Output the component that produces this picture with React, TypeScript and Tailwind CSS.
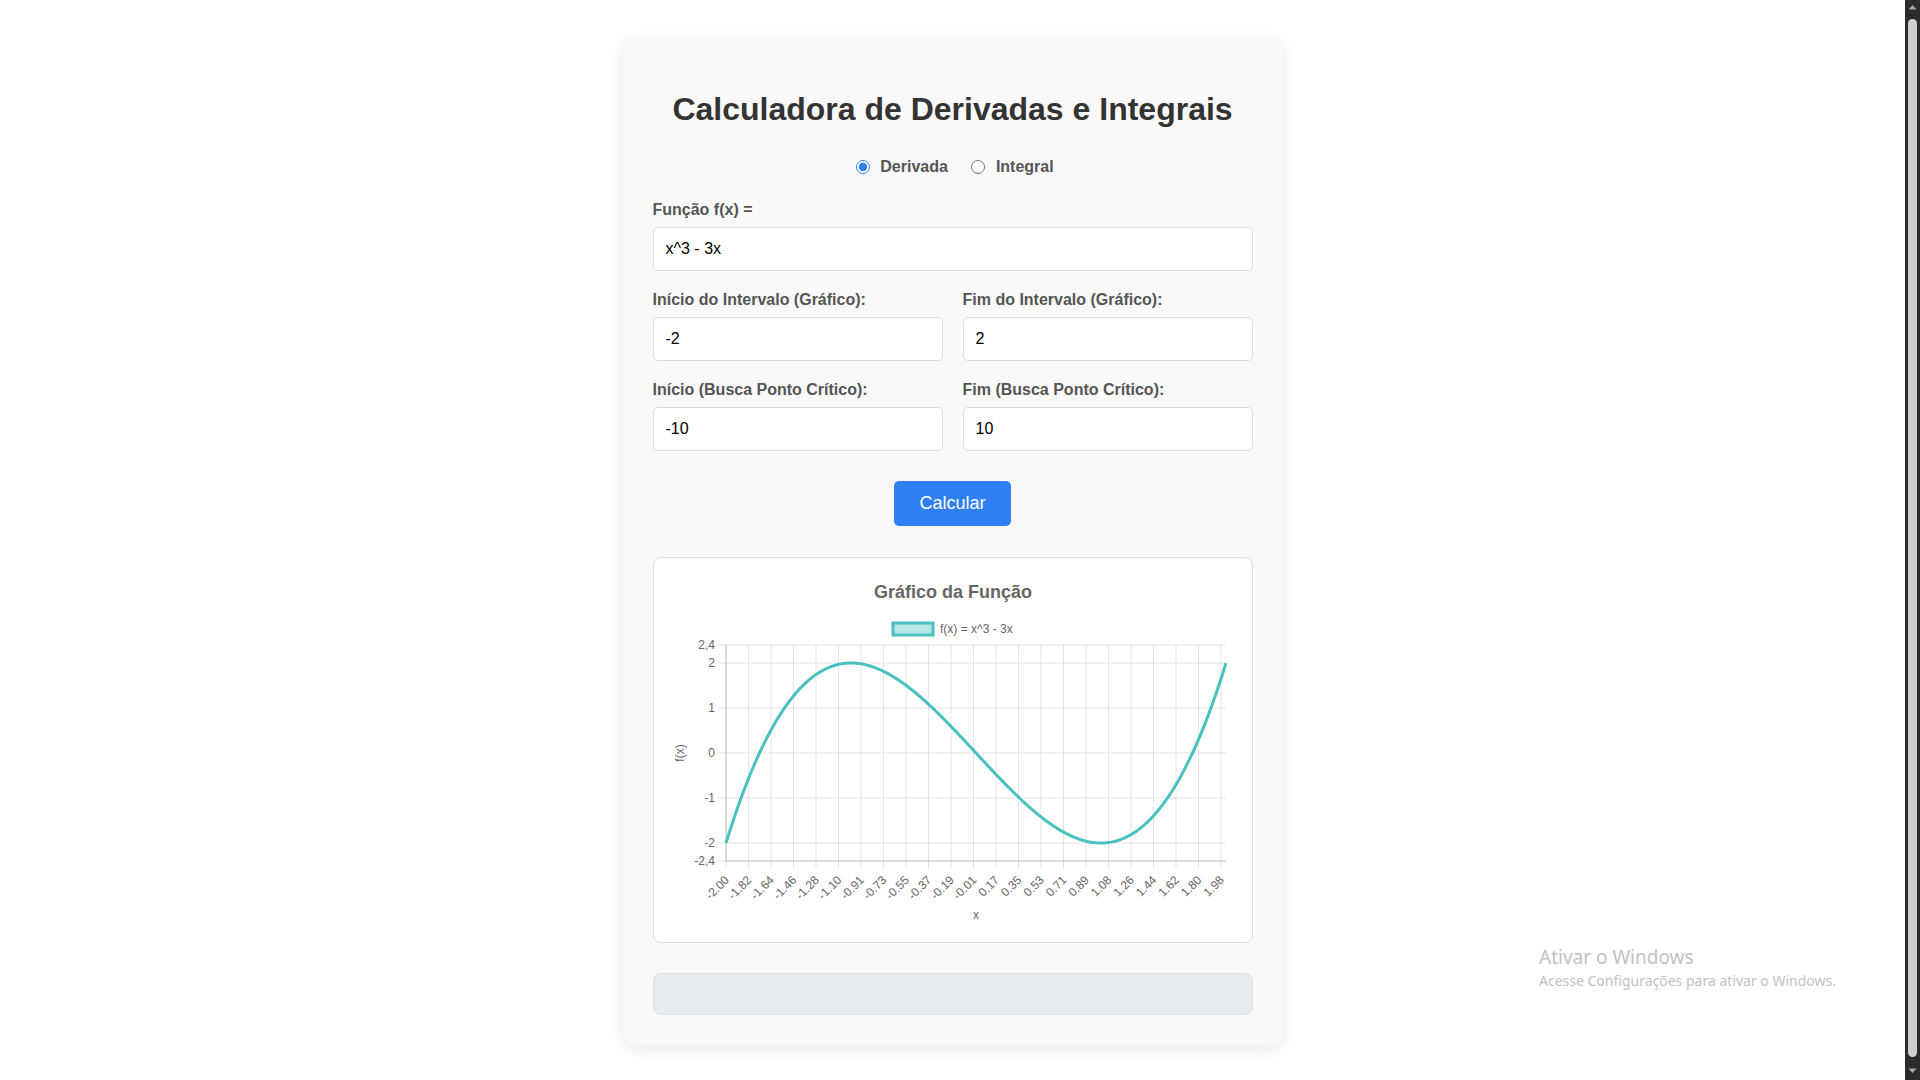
import React from "react";

const xLabels = [
  "-2.00", "-1.82", "-1.64", "-1.46", "-1.28", "-1.10", "-0.91", "-0.73", "-0.55", "-0.37", "-0.19", "-0.01",
  "0.17", "0.35", "0.53", "0.71", "0.89", "1.08", "1.26", "1.44", "1.62", "1.80", "1.98",
];

const yTicks = [
  { label: "2,4", y: 87 },
  { label: "2", y: 105 },
  { label: "1", y: 150 },
  { label: "0", y: 195 },
  { label: "-1", y: 240 },
  { label: "-2", y: 285 },
  { label: "-2,4", y: 303 },
];

function Chart() {
  const pts = Array.from({ length: 201 }, (_, i) => {
    const x = -2 + 0.02 * i;
    const y = x * x * x - 3 * x;
    return `${(72 + 2.5 * i).toFixed(2)},${(195 - 45 * y).toFixed(2)}`;
  }).join(" ");
  const grid = "rgba(0,0,0,0.1)";
  return (
    <svg width="598" height="384" className="block" style={{ fontFamily: "'Liberation Sans', Arial, sans-serif" }}>
      <text x="299" y="40" textAnchor="middle" fontSize="18" fontWeight="bold" fill="#666">
        Gráfico da Função
      </text>
      <rect x="239" y="65" width="40" height="12" fill="rgba(75,192,192,0.4)" stroke="rgb(75,192,192)" strokeWidth="3" />
      <text x="286" y="75" fontSize="12" fill="#666">f(x) = x^3 - 3x</text>

      {yTicks.map((t) => (
        <g key={t.label}>
          <line x1="64" x2="572" y1={t.y} y2={t.y} stroke={grid} strokeWidth="1" />
          <text x="61" y={t.y + 4} textAnchor="end" fontSize="12" fill="#666">
            {t.label}
          </text>
        </g>
      ))}
      {xLabels.map((l, i) => {
        const x = 72 + 22.5 * i;
        return (
          <g key={l}>
            <line x1={x} x2={x} y1="87" y2="311" stroke={grid} strokeWidth="1" />
            <text
              x={x + 1}
              y={320}
              dy="4"
              textAnchor="end"
              fontSize="12"
              fill="#666"
              transform={`rotate(-45 ${x + 1} 320)`}
            >
              {l}
            </text>
          </g>
        );
      })}
      <line x1="72" x2="72" y1="87" y2="303" stroke="rgba(0,0,0,0.18)" strokeWidth="1" />
      <line x1="72" x2="572" y1="303" y2="303" stroke="rgba(0,0,0,0.18)" strokeWidth="1" />
      <polyline points={pts} fill="none" stroke="rgb(75,192,192)" strokeWidth="3" strokeLinejoin="round" />
      <text x="322" y="361" textAnchor="middle" fontSize="12" fill="#666">x</text>
      <text transform="translate(30,195) rotate(-90)" textAnchor="middle" fontSize="12" fill="#666">
        f(x)
      </text>
    </svg>
  );
}

function Field({ label, value }: { label: string; value: string }) {
  return (
    <div className="flex flex-col">
      <label className="text-[16px] leading-[18px] font-bold text-[#555]">{label}</label>
      <input
        type="text"
        defaultValue={value}
        className="mt-[8px] h-[44px] w-full rounded-[5px] border border-[#ddd] bg-white px-[12px] text-[16px] text-black outline-none"
      />
    </div>
  );
}

export default function App() {
  return (
    <div className="flex h-screen w-full overflow-hidden bg-white font-['Liberation_Sans',Arial,sans-serif]">
      <div className="relative flex-1">
        <div className="mx-auto mt-[37px] w-[660px] rounded-[12px] bg-[#f9f9f9] p-[30px] shadow-[0_4px_16px_rgba(0,0,0,0.09)]">
          <h1 className="mt-[24px] text-center text-[32px] leading-[37px] font-bold text-[#333]">
            Calculadora de Derivadas e Integrais
          </h1>
          <div className="mt-[30px] flex h-[18px] items-center justify-center gap-[23px] pl-[5px]">
            <label className="flex items-center gap-[10px] text-[16px] font-bold text-[#555]">
              <input type="radio" name="mode" defaultChecked className="m-0 h-[14px] w-[14px] accent-[#2f7fef]" />
              Derivada
            </label>
            <label className="flex items-center gap-[11px] text-[16px] font-bold text-[#555]">
              <input type="radio" name="mode" className="m-0 h-[14px] w-[14px] accent-[#2f7fef]" />
              Integral
            </label>
          </div>
          <div className="mt-[25px]">
            <Field label="Função f(x) =" value="x^3 - 3x" />
          </div>
          <div className="mt-[20px] grid grid-cols-2 gap-x-[20px] gap-y-[20px]">
            <Field label="Início do Intervalo (Gráfico):" value="-2" />
            <Field label="Fim do Intervalo (Gráfico):" value="2" />
            <Field label="Início (Busca Ponto Crítico):" value="-10" />
            <Field label="Fim (Busca Ponto Crítico):" value="10" />
          </div>
          <div className="mt-[30px] flex justify-center">
            <button className="h-[45px] rounded-[5px] bg-[#2f80f5] px-[25px] text-[18px] text-white">Calcular</button>
          </div>
          <div className="mt-[31px] h-[386px] w-[600px] rounded-[8px] border border-[#ddd] bg-white">
            <Chart />
          </div>
          <div className="mt-[30px] h-[42px] rounded-[8px] border border-[#dde1e5] bg-[#e8ebee]" />
        </div>

        <div className="absolute left-[1539px] top-[945px] font-['Noto_Sans','Open_Sans',sans-serif] text-[#c2c2c2]">
          <div className="text-[19px] leading-[25px]">Ativar o Windows</div>
          <div className="text-[14px] leading-[22px]">Acesse Configurações para ativar o Windows.</div>
        </div>
      </div>

      <div className="flex h-full w-[15px] flex-col items-center bg-[#2b2b2b] pt-[4px] pb-[6px]">
        <svg width="9" height="6" className="block">
          <polygon points="0.5,5.5 4.5,1 8.5,5.5" fill="#a9a9a9" />
        </svg>
        <div className="mt-[9px] mb-[11px] w-[9px] flex-1 rounded-full bg-[#cfcfcf]" />
        <svg width="9" height="6" className="block">
          <polygon points="0.5,0.5 4.5,5 8.5,0.5" fill="#a9a9a9" />
        </svg>
      </div>
    </div>
  );
}
